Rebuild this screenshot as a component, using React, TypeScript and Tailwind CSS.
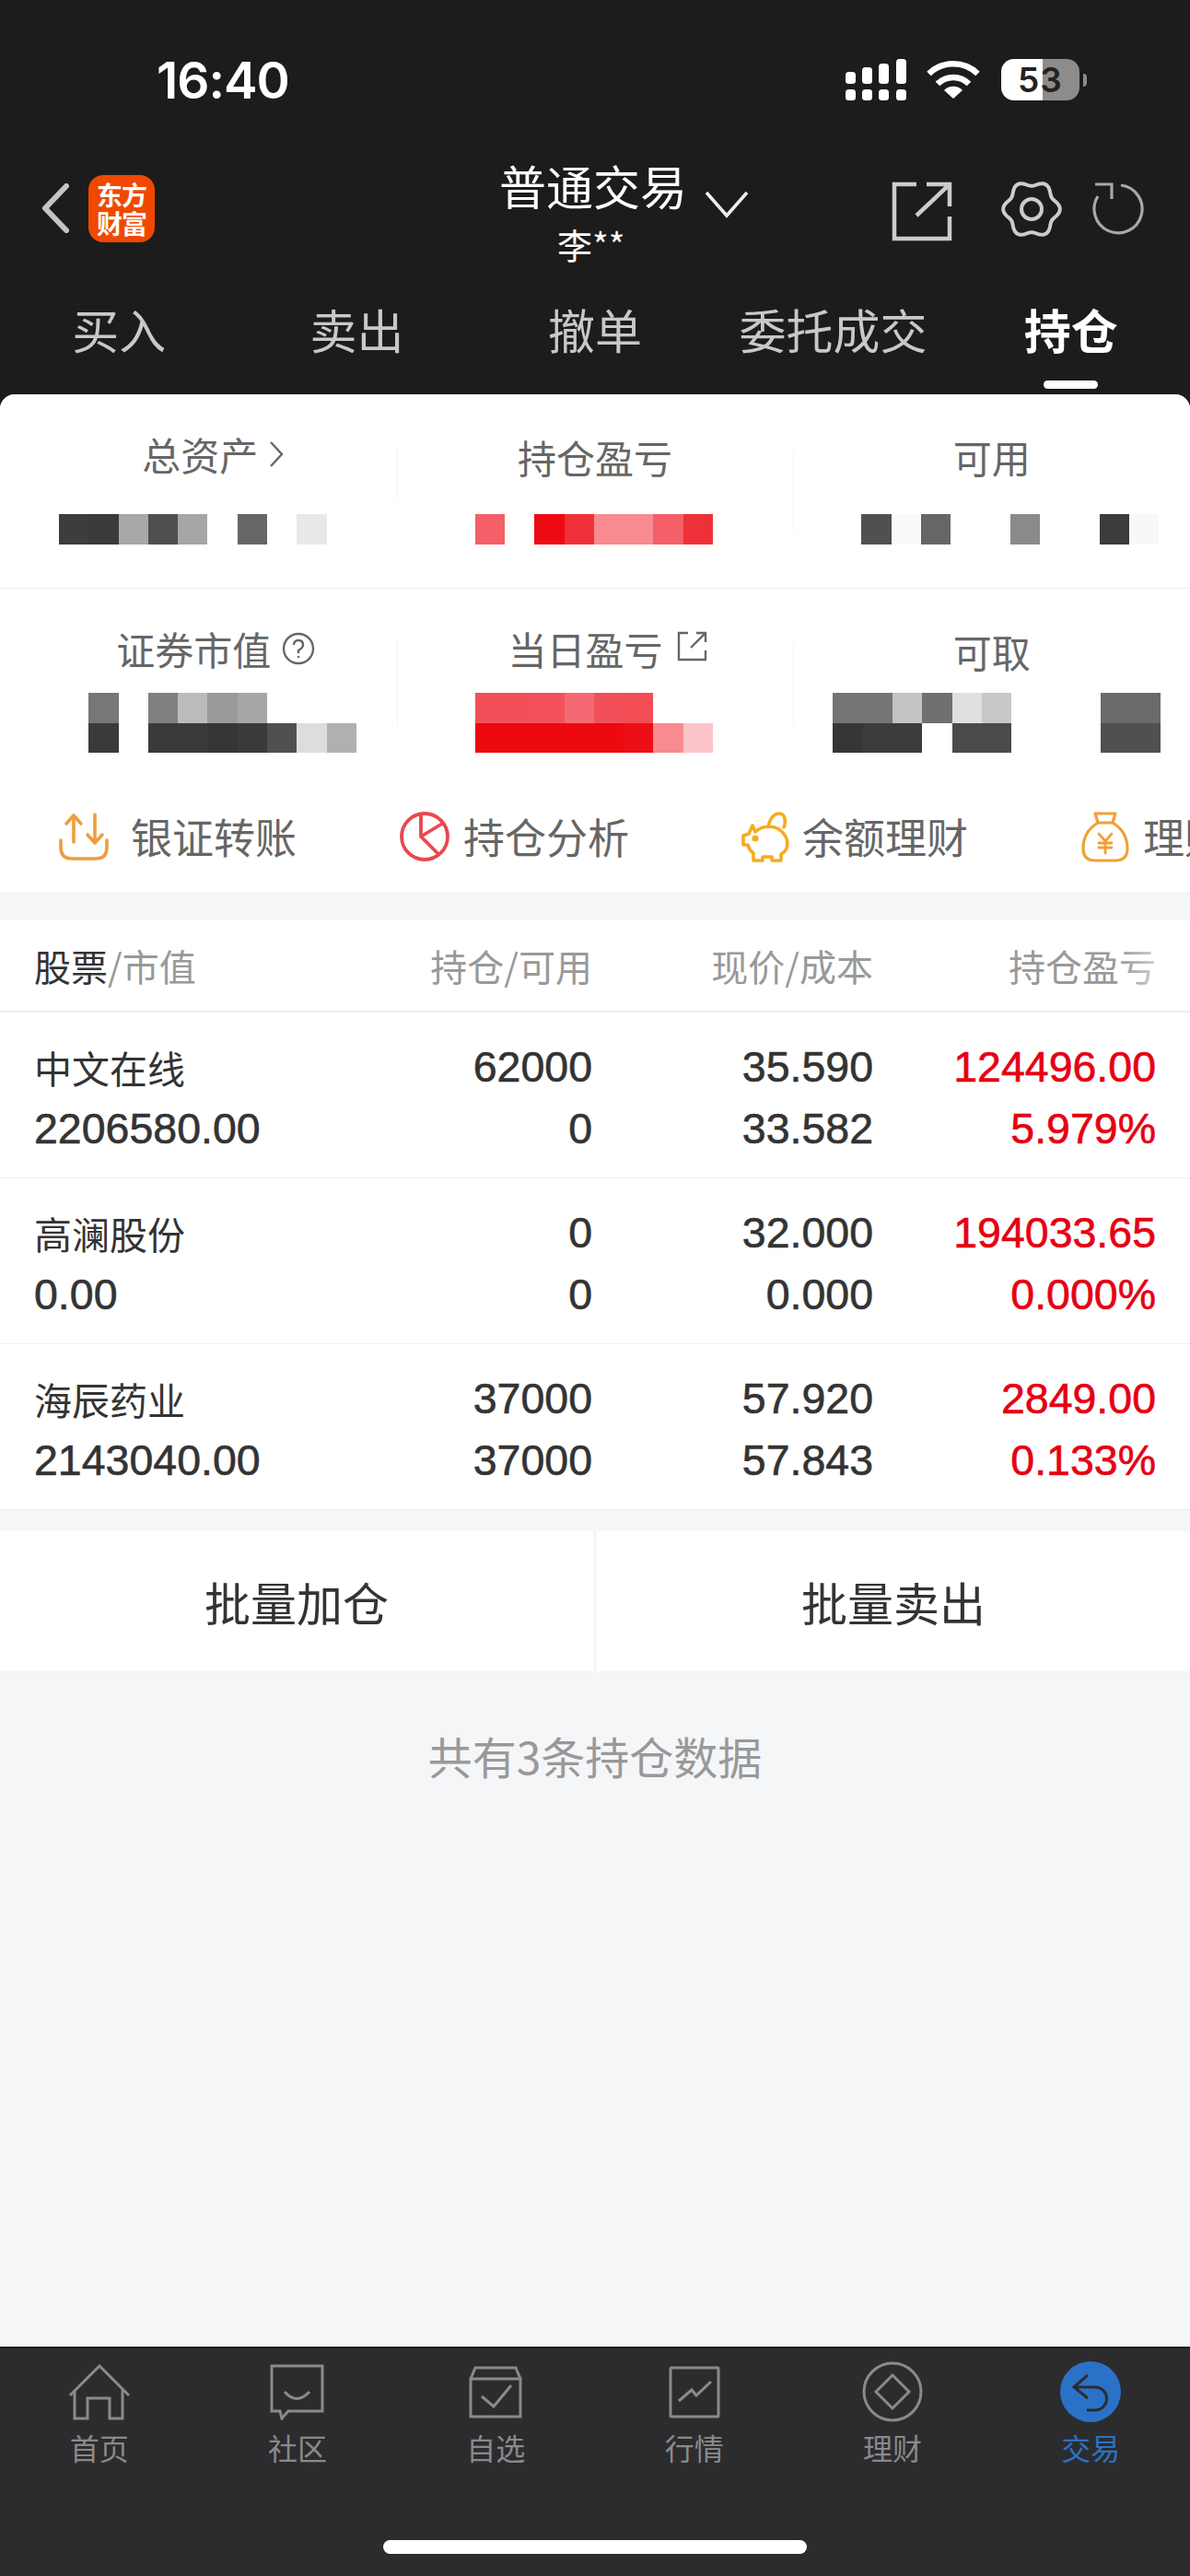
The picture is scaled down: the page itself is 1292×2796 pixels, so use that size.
import type { ReactNode } from 'react'

const cjk = "font-['Noto_Sans_CJK_SC',sans-serif]"
const num = "font-['Liberation_Sans','Noto_Sans_CJK_SC',sans-serif]"

type Cell = string | null

// masked amounts are shown as rows of flat colour cells
const Mosaic = ({ rows, className }: { rows: Cell[][]; className: string }) => (
  <div className={`flex flex-col ${className}`}>
    {rows.map((row, y) => (
      <div key={y} className="flex h-[32.5px]">
        {row.map((c, x) => (
          <div key={x} className="h-full w-[32.3px]" style={{ background: c ?? 'transparent' }} />
        ))}
      </div>
    ))}
  </div>
)

const Summary = ({
  label,
  rows,
  mosaicClass,
  labelClass,
  dividerClass
}: {
  label: ReactNode
  rows: Cell[][]
  mosaicClass: string
  labelClass: string
  dividerClass?: string
}) => (
  <div className="relative flex flex-col">
    {dividerClass && <div className={`absolute left-0 w-px bg-[#f3f3f3] ${dividerClass}`} />}
    <div className={`flex h-[50px] items-center justify-center text-[42px] leading-none text-[#666] ${labelClass}`}>
      {label}
    </div>
    <Mosaic rows={rows} className={mosaicClass} />
  </div>
)

const gearPath = (() => {
  const pts: string[] = []
  for (let i = 0; i < 180; i++) {
    const t = (i / 180) * Math.PI * 2
    const r = 28 + 2.8 * Math.cos(6 * t)
    pts.push(`${(33 + r * Math.cos(t)).toFixed(2)} ${(32 + r * Math.sin(t)).toFixed(2)}`)
  }
  return `M${pts.join('L')}Z`
})()

const StatusBar = () => (
  <div className="flex h-[170px] shrink-0 items-start justify-between pl-[170px] pr-[112px] pt-[60px]">
    <span className="font-['Inter',sans-serif] text-[55px] font-semibold leading-[54px] tracking-[-1px] text-white">
      16:40
    </span>
    <div className="flex items-start pt-[4px]">
      <svg width="66" height="45" viewBox="0 0 66 45" fill="#fff">
        <rect x="0" y="14" width="11" height="13" rx="3.5" />
        <rect x="18" y="9" width="11" height="18" rx="3.5" />
        <rect x="36" y="5" width="11" height="22" rx="3.5" />
        <rect x="55" y="0" width="11" height="27" rx="3.5" />
        <rect x="0" y="33" width="11" height="12" rx="3.5" />
        <rect x="18" y="33" width="11" height="12" rx="3.5" />
        <rect x="36" y="33" width="11" height="12" rx="3.5" />
        <rect x="55" y="33" width="11" height="12" rx="3.5" />
      </svg>
      <svg className="ml-[22px] mt-[1px]" width="58" height="43" viewBox="0 0 58 43" fill="none" stroke="#fff" strokeWidth="6.5">
        <path d="M2.5 15A38 38 0 0 1 55.5 15" />
        <path d="M12 26A24 24 0 0 1 46 26" />
        <path d="M19 33A14 14 0 0 1 39 33L29 42Z" fill="#fff" stroke="none" />
      </svg>
      <div className="relative ml-[23px] flex h-[45px] w-[85px] overflow-hidden rounded-[14px]">
        <div className="h-full w-[45px] bg-white" />
        <div className="h-full flex-1 bg-[#8c8c8c]" />
        <span className="absolute inset-0 flex items-center justify-center font-['Inter',sans-serif] text-[37px] font-semibold tracking-[1px] text-[#222]">
          53
        </span>
      </div>
      <div className="ml-[4px] mt-[16px] h-[14px] w-[4px] rounded-r-full bg-[#8c8c8c]" />
    </div>
  </div>
)

const NavBar = () => (
  <div className="relative h-[118px] shrink-0">
    <div className="flex items-start pl-[45px]">
      <svg className="mt-[29px]" width="30" height="54" viewBox="0 0 30 54" fill="none" stroke="#c4c4c4" strokeWidth="6" strokeLinecap="round" strokeLinejoin="round">
        <path d="M27 3L4 27L27 51" />
      </svg>
      <div className="ml-[21px] mt-[20px] flex h-[73px] w-[72px] flex-col items-center justify-center rounded-[16px] bg-[#f04800] text-[28px] font-bold leading-[31px] tracking-[-1px] text-[#fff]">
        <span>东方</span>
        <span>财富</span>
      </div>
      <div className="ml-[374px] mt-[3px] flex flex-col items-center">
        <span className="text-[51px] leading-[56px] text-white">普通交易</span>
      </div>
      <svg className="ml-[19px] mt-[37px]" width="48" height="30" viewBox="0 0 48 30" fill="none" stroke="#eee" strokeWidth="3.5">
        <path d="M2 2L24 27L46 2" />
      </svg>
      <svg className="ml-[155px] mt-[27px]" width="66" height="65" viewBox="0 0 66 65" fill="none" stroke="#ccc" strokeWidth="4.5">
        <path d="M27 3H3V62H63V38" />
        <path d="M38 3H63V27" />
        <path d="M27 37L62 4" />
      </svg>
      <svg className="ml-[53px] mt-[25px]" width="66" height="64" viewBox="0 0 66 64" fill="none" stroke="#ccc" strokeWidth="4">
        <path d={gearPath} />
        <circle cx="33" cy="32" r="11" />
      </svg>
      <svg className="ml-[33px] mt-[28px]" width="58" height="58" viewBox="0 0 58 58" fill="none" stroke="#a8a8a8" strokeWidth="3.2">
        <path d="M31 3A26 26 0 1 1 6 15" />
        <path d="M3 2H21V18" />
      </svg>
    </div>
    <span className="absolute left-[605px] top-[75px] text-[38px] leading-[40px] text-white">李**</span>
  </div>
)

const tabs = ['买入', '卖出', '撤单', '委托成交', '持仓']

const Tabs = () => (
  <div className="grid h-[140px] shrink-0 grid-cols-5">
    {tabs.map((t, i) => (
      <div key={t} className="flex flex-col items-center pt-[37px]">
        <span className={`text-[51px] leading-[64px] ${i === 4 ? 'font-bold text-white' : 'text-[#c8c8c8]'}`}>{t}</span>
        {i === 4 && <div className="mt-[24px] h-[9px] w-[59px] rounded-full bg-white" />}
      </div>
    ))}
  </div>
)

const TransferIcon = () => (
  <svg className="shrink-0" width="54" height="52" viewBox="0 0 54 52" fill="none" stroke="#ec9f3e" strokeWidth="3.6" strokeLinecap="round" strokeLinejoin="round">
    <path d="M2 30V38Q2 50 14 50H40Q52 50 52 38V30" />
    <path d="M16 32V3M8 12L16 3L24 12" />
    <path d="M39 2V33M31 24L39 33L47 24" />
  </svg>
)

const PieIcon = () => (
  <svg className="shrink-0" width="54" height="54" viewBox="0 0 54 54" fill="none" stroke="#e8484f" strokeWidth="3.8" strokeLinejoin="round">
    <circle cx="27" cy="27" r="25" />
    <path d="M23 3V27L46 13M23 27L43 47" />
  </svg>
)

const PiggyIcon = () => (
  <svg className="shrink-0" width="54" height="55" viewBox="0 0 54 55" fill="none" stroke="#f5ac1e" strokeWidth="3.6" strokeLinejoin="round" strokeLinecap="round">
    <path d="M30 16C32 8 36 2 42 2C48 2 50 10 47 17" />
    <path d="M13 15L16 22C24 14 40 14 47 24C53 32 52 42 44 46V53H34V49H24V53H14V45C11 43 9 40 8 36H3V26L9 24Z" />
    <circle cx="16" cy="29" r="1.8" fill="#f5ac1e" />
  </svg>
)

const BagIcon = () => (
  <svg className="shrink-0" width="52" height="55" viewBox="0 0 52 55" fill="none" stroke="#f0a136" strokeWidth="3.2" strokeLinejoin="round" strokeLinecap="round">
    <path d="M15 2H37L34 12H18Z" />
    <path d="M18 12C8 18 2 28 2 40Q2 53 15 53H37Q50 53 50 40C50 28 44 18 34 12" />
    <path d="M19 24L26 32L33 24M26 32V45M19 34H33M19 39H33" strokeWidth="2.8" />
  </svg>
)

const Shortcuts = () => (
  <div className="flex h-[120px] shrink-0 items-center overflow-hidden whitespace-nowrap pl-[64px] text-[45px] text-[#666]">
    <TransferIcon />
    <span className="ml-[24px] shrink-0">银证转账</span>
    <div className="ml-[112px] shrink-0"><PieIcon /></div>
    <span className="ml-[15px] shrink-0">持仓分析</span>
    <div className="ml-[121px] shrink-0"><PiggyIcon /></div>
    <span className="ml-[13px] shrink-0">余额理财</span>
    <div className="ml-[123px] shrink-0"><BagIcon /></div>
    <span className="ml-[15px] shrink-0">理财</span>
  </div>
)

const cols = 'grid grid-cols-[363px_243px_305px_307px] px-[37px]'

const TableHeader = () => (
  <div className={`${cols} relative h-[101px] shrink-0 items-center border-b-[2px] border-[#eeeeee] text-[40px] text-[#999]`}>
    <span><span className="text-[#333]">股票</span>/市值</span>
    <span className="text-right">持仓/可用</span>
    <span className="text-right">现价/成本</span>
    <span className="text-right">持仓盈亏</span>
    <div className="absolute right-0 top-0 h-full w-[76px] bg-gradient-to-r from-transparent to-white" />
  </div>
)

const positions = [
  { name: '中文在线', value: '2206580.00', qty: '62000', free: '0', price: '35.590', cost: '33.582', pnl: '124496.00', pct: '5.979%' },
  { name: '高澜股份', value: '0.00', qty: '0', free: '0', price: '32.000', cost: '0.000', pnl: '194033.65', pct: '0.000%' },
  { name: '海辰药业', value: '2143040.00', qty: '37000', free: '37000', price: '57.920', cost: '57.843', pnl: '2849.00', pct: '0.133%' }
]

const Row = ({ p }: { p: (typeof positions)[number] }) => (
  <div className={`${cols} h-[180px] shrink-0 border-b border-[#eeeeee] pt-[26px] ${num} text-[46.5px] leading-[67px] text-[#333] [-webkit-text-stroke:0.6px_currentColor]`}>
    <div className="flex flex-col">
      <span className={`${cjk} text-[41px] [-webkit-text-stroke:0px]`}>{p.name}</span>
      <span>{p.value}</span>
    </div>
    <div className="flex flex-col text-right">
      <span>{p.qty}</span>
      <span>{p.free}</span>
    </div>
    <div className="flex flex-col text-right">
      <span>{p.price}</span>
      <span>{p.cost}</span>
    </div>
    <div className="flex flex-col text-right text-[#e60012]">
      <span>{p.pnl}</span>
      <span>{p.pct}</span>
    </div>
  </div>
)

const HomeIcon = () => (
  <svg width="68" height="61" viewBox="0 0 68 61" fill="none" stroke="#8a8a8a" strokeWidth="3">
    <path d="M2 34L34 2L66 34" />
    <path d="M7 28V59H21V37H45V59H59V28" />
  </svg>
)
const ChatIcon = () => (
  <svg width="59" height="61" viewBox="0 0 59 61" fill="none" stroke="#8a8a8a" strokeWidth="3">
    <path d="M2 2H57V51H20L13 59L11 51H2Z" />
    <path d="M16 30Q29 45 43 30" />
  </svg>
)
const WatchIcon = () => (
  <svg width="58" height="57" viewBox="0 0 58 57" fill="none" stroke="#8a8a8a" strokeWidth="3">
    <path d="M2 14H56V55H2Z" />
    <path d="M2 14L7 2H51L56 14" />
    <path d="M14 33L27 44L46 21" />
  </svg>
)
const ChartIcon = () => (
  <svg width="56" height="57" viewBox="0 0 56 57" fill="none" stroke="#8a8a8a" strokeWidth="3">
    <rect x="2" y="2" width="52" height="53" rx="1" />
    <path d="M11 38L25 26L30 32L46 17" />
  </svg>
)
const WealthIcon = () => (
  <svg width="66" height="66" viewBox="0 0 66 66" fill="none" stroke="#8a8a8a" strokeWidth="3">
    <circle cx="33" cy="33" r="31" />
    <path d="M33 15L51 33L33 51L15 33Z" />
  </svg>
)
const TradeIcon = () => (
  <svg width="66" height="66" viewBox="0 0 66 66" fill="none">
    <circle cx="33" cy="33" r="33" fill="#2a72c8" />
    <path d="M30 15L15 28L30 40M15 28H38A12.5 12.5 0 0 1 38 53H29" stroke="#2c2c2e" strokeWidth="3" />
  </svg>
)

const navItems = [
  { label: '首页', icon: <HomeIcon /> },
  { label: '社区', icon: <ChatIcon /> },
  { label: '自选', icon: <WatchIcon /> },
  { label: '行情', icon: <ChartIcon /> },
  { label: '理财', icon: <WealthIcon /> },
  { label: '交易', icon: <TradeIcon /> }
]

const BottomNav = () => (
  <div className="flex h-[249px] shrink-0 flex-col border-t-[2px] border-[#1c1c1c] bg-[#2c2c2e]">
    <div className="grid grid-cols-6 pt-[13px]">
      {navItems.map((n, i) => (
        <div key={n.label} className="flex flex-col items-center">
          <div className="flex h-[68px] items-center">{n.icon}</div>
          <span className={`mt-[6px] text-[32px] leading-[40px] ${i === 5 ? 'text-[#2a72c8]' : 'text-[#8a8a8a]'}`}>
            {n.label}
          </span>
        </div>
      ))}
    </div>
    <div className="mt-[81px] h-[15px] w-[460px] self-center rounded-full bg-white" />
  </div>
)

const R = '#f45f68'

export default function App() {
  return (
    <div className={`flex h-[2796px] w-[1292px] flex-col overflow-hidden bg-[#1c1c1c] ${cjk}`}>
      <StatusBar />
      <NavBar />
      <Tabs />
      <div className="flex min-h-0 flex-1 flex-col rounded-t-[16px] bg-[#f5f6f8]">
        <div className="shrink-0 rounded-t-[16px] bg-white">
          <div className="grid h-[211px] grid-cols-3 border-b border-[#eeeeee] pt-[43px]">
            <Summary
              label={
                <>
                  <span>总资产</span>
                  <svg className="ml-[12px]" width="16" height="30" viewBox="0 0 16 30" fill="none" stroke="#666" strokeWidth="2.4">
                    <path d="M2 2L14 15L2 28" />
                  </svg>
                </>
              }
              labelClass="-mt-[3px] pl-[32px]"
              mosaicClass="ml-[64px] mt-[40px]"
              rows={[['#3d3d3d', '#3a3a3a', '#a8a8a8', '#4f4f4f', '#a6a6a6', null, '#666666', null, '#e8e8e8']]}
            />
            <Summary
              label="持仓盈亏"
              labelClass=""
              dividerClass="top-[17px] h-[54px]"
              mosaicClass="ml-[85px] mt-[37px]"
              rows={[[R, null, '#ee0a12', '#f03038', '#f88a90', '#f88a90', R, '#ee3038']]}
            />
            <Summary
              label="可用"
              labelClass=""
              dividerClass="top-[17px] h-[89px]"
              mosaicClass="ml-[74px] mt-[37px]"
              rows={[['#505050', '#fafafa', '#666666', null, null, '#8a8a8a', null, null, '#3c3c3c', '#f8f8f8']]}
            />
          </div>
          <div className="grid h-[209px] grid-cols-3 pt-[40px]">
            <Summary
              label={
                <>
                  <span>证券市值</span>
                  <svg className="ml-[12px]" width="36" height="36" viewBox="0 0 36 36" fill="none" stroke="#666" strokeWidth="2.4">
                    <circle cx="18" cy="18" r="16" />
                    <path d="M13 14Q13 9 18 9Q23 9 23 14Q23 17 18 20V23" />
                    <path d="M18 26V28" />
                  </svg>
                </>
              }
              labelClass="pl-[38px]"
              mosaicClass="ml-[64px] mt-[23px]"
              rows={[
                [null, '#777777', null, '#808080', '#bbbbbb', '#9a9a9a', '#a6a6a6'],
                [null, '#3a3a3a', null, '#3a3a3a', '#3a3a3a', '#363636', '#3a3a3a', '#505050', '#dddddd', '#b0b0b0']
              ]}
            />
            <Summary
              label={
                <>
                  <span>当日盈亏</span>
                  <svg className="ml-[14px] -mt-[6px]" width="35" height="35" viewBox="0 0 35 35" fill="none" stroke="#666" strokeWidth="2.4">
                    <path d="M13 3H3V32H32V22" />
                    <path d="M22 3H32V13M16 19L31 4" />
                  </svg>
                </>
              }
              labelClass="pl-[28px]"
              dividerClass="top-[17px] h-[91px]"
              mosaicClass="ml-[85px] mt-[23px]"
              rows={[
                ['#f25058', '#f25058', '#f2505a', '#f56a72', '#f25058', '#f24c55'],
                ['#ec0a10', '#ec0a10', '#ec0a10', '#ec0a10', '#ec0a10', '#ec0f16', '#f88a90', '#fcc4c8']
              ]}
            />
            <Summary
              label="可取"
              labelClass="mt-[3px]"
              dividerClass="top-[17px] h-[91px]"
              mosaicClass="ml-[43px] mt-[20px]"
              rows={[
                ['#757575', '#757575', '#c4c4c4', '#707070', '#e0e0e0', '#c8c8c8', null, null, null, '#6a6a6a', '#6a6a6a'],
                ['#363636', '#3c3c3c', '#3c3c3c', null, '#4a4a4a', '#4a4a4a', null, null, null, '#505050', '#505050']
              ]}
            />
          </div>
          <Shortcuts />
        </div>
        <div className="mt-[30px] shrink-0 bg-white">
          <TableHeader />
          {positions.map((p) => (
            <Row key={p.name} p={p} />
          ))}
        </div>
        <div className="mt-[23px] flex h-[152px] shrink-0 gap-[4px]">
          <div className="flex flex-1 items-center justify-center bg-white text-[50px] text-[#333]">批量加仓</div>
          <div className="flex flex-1 items-center justify-center bg-white text-[50px] text-[#333]">批量卖出</div>
        </div>
        <div className="mt-[61px] text-center text-[48px] leading-[60px] text-[#999]">共有3条持仓数据</div>
      </div>
      <BottomNav />
    </div>
  )
}
